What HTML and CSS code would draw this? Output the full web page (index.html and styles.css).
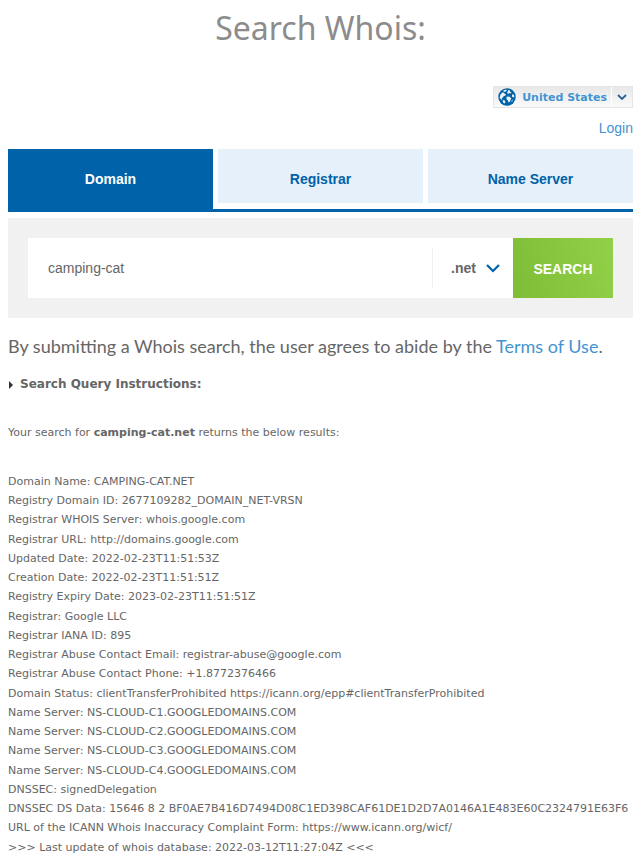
FILE: index.html
```
<!DOCTYPE html>
<html lang="en">
<head>
    <meta charset="UTF-8">
    <meta name="viewport" content="width=device-width, initial-scale=1.0">
    <title>Search Whois</title>
    <link rel="stylesheet" href="styles.css">
</head>
<body>
    <header class="header">
        <h1>Search Whois:</h1>
        <div class="user-nav">
            <button type="button" class="country">
                <svg class="globe" viewBox="0 0 18 18" aria-hidden="true">
                    <circle cx="9" cy="9" r="8.7" fill="#0062a8"/>
                    <path fill="#eef3f7" d="M5.4 2.6 8 1.6l.8 1-1.2 1-1.8.4zM2.6 6.2l1.8-1.8 1.6.4.8 1.2 1.2.2-.6 1.4-1.8.6-.6 1.4-1.4.4.8 1.6-1.2.2-1.6-2.4zM10 2.2l2.2.2-.4 1.2 1.6.8-.8 1-1.6-.4-.8 1-1-.8zM14 6.4l1.6.2.8 2-1 1-1.4-1zM8.6 8.8l2.4-.4 1.6 1.4.8.2-.8 1.8-.8 2-1.2.6-.8-2.2-1.4-1zM4.8 12l2 .6.6 1.6-.8 1.4-1.6-1.2zM13.6 12.4l1.2-.8-.4 1.6-1 .8z"/>
                </svg>
                <span class="country-name">United States</span>
                <span class="country-arrow">
                    <svg width="10" height="6" viewBox="0 0 10 6" aria-hidden="true">
                        <path d="M1 1l4 4 4-4" fill="none" stroke="#2b6098" stroke-width="1.8"/>
                    </svg>
                </span>
            </button>
            <a class="login" href="#">Login</a>
        </div>
    </header>

    <main>
        <nav class="tabs">
            <a class="tab active" href="#">Domain</a>
            <a class="tab" href="#">Registrar</a>
            <a class="tab" href="#">Name Server</a>
        </nav>

        <form class="search">
            <input class="search-input" type="text" value="camping-cat" aria-label="Domain name">
            <div class="tld">
                <select class="tld-select" aria-label="Extension">
                    <option>.net</option>
                    <option>.com</option>
                </select>
                <svg class="tld-arrow" viewBox="0 0 14 9" aria-hidden="true">
                    <path d="M1 1l6 6 6-6" fill="none" stroke="#0062a8" stroke-width="2.2"/>
                </svg>
            </div>
            <button class="search-btn" type="button">SEARCH</button>
        </form>

        <p class="terms">By submitting a Whois search, the user agrees to abide by the <a href="#">Terms of Use</a>.</p>

        <details class="instructions">
            <summary>Search Query Instructions:</summary>
        </details>

        <p class="summary">Your search for <strong>camping-cat.net</strong> returns the below results:</p>

        <ul class="results">
            <li>Domain Name: CAMPING-CAT.NET</li>
            <li>Registry Domain ID: 2677109282_DOMAIN_NET-VRSN</li>
            <li>Registrar WHOIS Server: whois.google.com</li>
            <li>Registrar URL: http://domains.google.com</li>
            <li>Updated Date: 2022-02-23T11:51:53Z</li>
            <li>Creation Date: 2022-02-23T11:51:51Z</li>
            <li>Registry Expiry Date: 2023-02-23T11:51:51Z</li>
            <li>Registrar: Google LLC</li>
            <li>Registrar IANA ID: 895</li>
            <li>Registrar Abuse Contact Email: registrar-abuse@google.com</li>
            <li>Registrar Abuse Contact Phone: +1.8772376466</li>
            <li>Domain Status: clientTransferProhibited https://icann.org/epp#clientTransferProhibited</li>
            <li>Name Server: NS-CLOUD-C1.GOOGLEDOMAINS.COM</li>
            <li>Name Server: NS-CLOUD-C2.GOOGLEDOMAINS.COM</li>
            <li>Name Server: NS-CLOUD-C3.GOOGLEDOMAINS.COM</li>
            <li>Name Server: NS-CLOUD-C4.GOOGLEDOMAINS.COM</li>
            <li>DNSSEC: signedDelegation</li>
            <li>DNSSEC DS Data: 15646 8 2 BF0AE7B416D7494D08C1ED398CAF61DE1D2D7A0146A1E483E60C2324791E63F6</li>
            <li>URL of the ICANN Whois Inaccuracy Complaint Form: https://www.icann.org/wicf/</li>
            <li>&gt;&gt;&gt; Last update of whois database: 2022-03-12T11:27:04Z &lt;&lt;&lt;</li>
        </ul>
    </main>
</body>
</html>
```

FILE: styles.css
```
* {
    box-sizing: border-box;
}

body {
    margin: 0;
    padding: 0 11px 0 8px;
    background: #fff;
    color: #666;
    font-family: Verdana, "DejaVu Sans", sans-serif;
    font-size: 11px;
    line-height: 19px;
}

a {
    color: #4493d1;
    text-decoration: none;
}

h1 {
    margin: 0;
    padding: 6px 0 36px;
    color: #8c8c8c;
    font-family: "Lucida Grande", "Noto Sans", sans-serif;
    font-size: 32px;
    font-weight: 400;
    line-height: 44px;
    text-align: center;
}

.user-nav {
    display: flex;
    flex-direction: column;
    align-items: flex-end;
    gap: 11px;
    padding-bottom: 12px;
}

.country {
    display: flex;
    align-items: center;
    height: 22px;
    padding: 0;
    border: 1px solid #e5e5e5;
    background: linear-gradient(#e8e8e8, #fafafa);
    color: #4493d1;
    font: bold 11px Verdana, "DejaVu Sans", sans-serif;
    cursor: pointer;
}

.globe {
    width: 18px;
    height: 18px;
    margin: 0 6px 0 4px;
}

.country-arrow {
    display: flex;
    align-items: center;
    justify-content: center;
    width: 21px;
    height: 20px;
    margin-left: 4px;
    border-left: 1px solid #fff;
}

.login {
    font: 14px/18px Arial, "Liberation Sans", sans-serif;
}

.tabs {
    display: flex;
    gap: 5px;
    padding-bottom: 6px;
    border-bottom: 3px solid #0062a8;
    font: bold 14px/16px Arial, "Liberation Sans", sans-serif;
}

.tab {
    flex: 1;
    padding: 22px 0 16px;
    background: #e6f0fa;
    color: #0062a8;
    text-align: center;
}

.tab.active {
    margin-bottom: -6px;
    background: #0062a8;
    color: #fff;
}

.search {
    display: flex;
    margin-top: 6px;
    padding: 20px;
    background: #f1f1f1;
    font: 14px/16px Arial, "Liberation Sans", sans-serif;
}

.search-input {
    flex: 1;
    min-width: 0;
    height: 60px;
    padding: 0 20px;
    border: none;
    background: #fff;
    color: #666;
    font: inherit;
}

.tld {
    position: relative;
    display: flex;
    align-items: center;
    width: 81px;
    background: #fff;
}

.tld-select {
    appearance: none;
    width: 100%;
    height: 40px;
    padding: 0 0 0 18px;
    border: none;
    border-left: 1px solid #f1f1f1;
    background: none;
    color: #666;
    font: inherit;
    font-weight: bold;
}

.tld-arrow {
    position: absolute;
    right: 13px;
    width: 14px;
    height: 9px;
    pointer-events: none;
}

.search-btn {
    width: 100px;
    padding: 2px 0 0;
    border: none;
    background: linear-gradient(75deg, #7fbd36, #92d048);
    color: #fff;
    font: inherit;
    font-weight: bold;
    cursor: pointer;
}

.terms {
    margin: 16px 0 17px;
    font-family: "Lucida Grande", Lato, sans-serif;
    font-size: 18px;
    line-height: 24px;
}

.instructions summary {
    display: flex;
    align-items: center;
    gap: 7px;
    font-size: 12px;
    font-weight: bold;
    cursor: pointer;
    list-style: none;
}

.instructions summary::before {
    content: "";
    margin-left: 1px;
    border: 4px solid transparent;
    border-left-color: #333;
    border-right-width: 0;
}

.summary {
    margin: 29px 0 30px;
}

.results {
    margin: 0;
    padding: 0;
    list-style: none;
    white-space: nowrap;
}

/* keeps the rhythm of the list slightly looser than the line height */
.results li:nth-child(4n) {
    padding-top: 1px;
}
```
